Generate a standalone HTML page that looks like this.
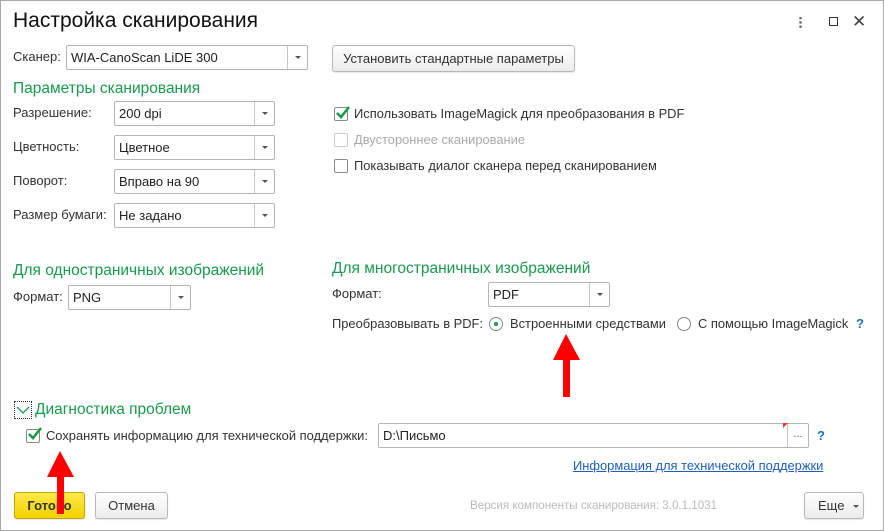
<!DOCTYPE html>
<html><head><meta charset="utf-8"><style>
*{box-sizing:border-box;margin:0;padding:0}
body{width:884px;height:531px;background:#fff;font-family:"Liberation Sans",Arial,sans-serif;font-size:13px;color:#333;position:relative;overflow:hidden}
#win{position:absolute;left:0;top:0;width:884px;height:531px;border:1px solid #a8a8a8}
.a{position:absolute;white-space:nowrap}
.t{line-height:16px}
.g{color:#1a9a4c;font-size:15.5px}
.box{position:absolute;border:1px solid #b5b5b5;border-radius:2px;background:#fff;height:25px;line-height:23px;padding-left:4px;color:#222}
.box .dd{position:absolute;right:0;top:0;width:20px;height:23px;border-left:1px solid #c8c8c8}
.box .dd:after{content:"";position:absolute;left:7px;top:10px;border-left:3px solid transparent;border-right:3px solid transparent;border-top:3px solid #555}
.btn{position:absolute;border:1px solid #b8b8b8;border-radius:3px;background:linear-gradient(#fff,#ececec);height:27px;line-height:25px;text-align:center;color:#333;box-shadow:0 1px 1px rgba(0,0,0,.1)}
.cb{position:absolute;width:14px;height:14px;border:1px solid #8a8a8a;border-radius:2px;background:#fff}
.rd{position:absolute;width:14px;height:14px;border:1px solid #8a8a8a;border-radius:50%;background:#fff}
</style></head><body><div id="win">
<div class="a" style="left:12px;top:8px;font-size:21px;color:#111">Настройка сканирования</div>
<div class="a" style="left:798px;top:15px;width:3px;height:13px;background:radial-gradient(circle,#666 1.2px,transparent 1.4px) 0 0/3px 4.3px"></div>
<div class="a" style="left:828px;top:16px;width:9px;height:9px;border:1.3px solid #333"></div>
<div class="a" style="left:851px;top:11px;font-size:17px;color:#444">✕</div>

<div class="a t" style="left:12px;top:48px">Сканер:</div>
<div class="box" style="left:65px;top:44px;width:242px">WIA-CanoScan LiDE 300<div class="dd"></div></div>
<div class="btn" style="left:331px;top:44px;width:243px">Установить стандартные параметры</div>

<div class="a g" style="left:12px;top:79px">Параметры сканирования</div>
<div class="a t" style="left:12px;top:104px">Разрешение:</div>
<div class="box" style="left:113px;top:100px;width:161px">200 dpi<div class="dd"></div></div>
<div class="a t" style="left:12px;top:138px">Цветность:</div>
<div class="box" style="left:113px;top:134px;width:161px">Цветное<div class="dd"></div></div>
<div class="a t" style="left:12px;top:172px">Поворот:</div>
<div class="box" style="left:113px;top:168px;width:161px">Вправо на 90<div class="dd"></div></div>
<div class="a t" style="left:12px;top:206px">Размер бумаги:</div>
<div class="box" style="left:113px;top:202px;width:161px">Не задано<div class="dd"></div></div>

<div class="cb" style="left:333px;top:106px"></div>
<svg class="a" style="left:334px;top:104px" width="16" height="16"><path d="M2 8 L6 12 L14 2" stroke="#1a9a4c" stroke-width="2.6" fill="none"/></svg>
<div class="a t" style="left:353px;top:105px;font-size:12.9px">Использовать ImageMagick для преобразования в PDF</div>
<div class="cb" style="left:333px;top:132px;border-color:#ccc"></div>
<div class="a t" style="left:353px;top:131px;color:#aaa;font-size:12.9px">Двустороннее сканирование</div>
<div class="cb" style="left:333px;top:158px"></div>
<div class="a t" style="left:353px;top:157px;font-size:12.9px">Показывать диалог сканера перед сканированием</div>

<div class="a g" style="left:12px;top:261px">Для одностраничных изображений</div>
<div class="a t" style="left:12px;top:288px">Формат:</div>
<div class="box" style="left:67px;top:284px;width:123px">PNG<div class="dd"></div></div>

<div class="a g" style="left:331px;top:259px">Для многостраничных изображений</div>
<div class="a t" style="left:331px;top:285px">Формат:</div>
<div class="box" style="left:487px;top:281px;width:122px">PDF<div class="dd"></div></div>
<div class="a t" style="left:331px;top:315px;font-size:12.9px">Преобразовывать в PDF:</div>
<div class="rd" style="left:488px;top:316px"></div>
<div class="a" style="left:493px;top:321px;width:4px;height:4px;border-radius:50%;background:#1a9a4c"></div>
<div class="a t" style="left:509px;top:315px;font-size:12.9px">Встроенными средствами</div>
<div class="rd" style="left:676px;top:316px"></div>
<div class="a t" style="left:697px;top:315px;font-size:12.9px">С помощью ImageMagick</div>
<div class="a t" style="left:855px;top:315px;color:#1f6fc0;font-weight:bold">?</div>

<svg class="a" style="left:550px;top:333px" width="32" height="64"><polygon points="15,0 29,26 19,26 19,63 12,63 12,26 2,26" fill="#f00"/></svg>

<div class="a" style="left:13px;top:400px;width:18px;height:18px;border:1px dotted #333"></div>
<svg class="a" style="left:14px;top:401px" width="16" height="16"><path d="M2 5 L8 11 L14 5" stroke="#1a9a4c" stroke-width="1.3" fill="none"/></svg>
<div class="a g" style="left:34px;top:400px">Диагностика проблем</div>
<div class="cb" style="left:25px;top:428px"></div>
<svg class="a" style="left:26px;top:425px" width="16" height="16"><path d="M2 8 L6 12 L14 2" stroke="#1a9a4c" stroke-width="2.6" fill="none"/></svg>
<div class="a t" style="left:45px;top:427px;font-size:12.9px">Сохранять информацию для технической поддержки:</div>
<div class="box" style="left:377px;top:422px;width:431px">D:\Письмо
<div style="position:absolute;right:0;top:0;width:21px;height:23px;border-left:1px solid #c8c8c8;line-height:20px;text-align:center;font-size:11px;color:#555">...</div>
<div style="position:absolute;right:20px;top:-1px;border-top:5px solid #e33;border-right:5px solid transparent"></div></div>
<div class="a t" style="left:816px;top:427px;color:#1f6fc0;font-weight:bold">?</div>
<div class="a t" style="left:572px;top:457px;color:#1f5fb8;text-decoration:underline;font-size:12.9px">Информация для технической поддержки</div>

<div class="btn" style="left:13px;top:491px;width:71px;background:linear-gradient(#ffe94a,#f2d200);border-color:#c4a800;font-weight:bold;color:#333">Готово</div>
<div class="btn" style="left:94px;top:491px;width:73px">Отмена</div>
<svg class="a" style="left:44px;top:450px" width="32" height="64"><polygon points="15,0 29,26 19,26 19,63 12,63 12,26 2,26" fill="#f00"/></svg>
<div class="a t" style="left:469px;top:497px;color:#bbb;font-size:11.6px">Версия компоненты сканирования: 3.0.1.1031</div>
<div class="btn" style="left:803px;top:491px;width:60px;text-align:left;padding-left:13px">Еще<span style="position:absolute;left:48px;top:12px;border-left:3px solid transparent;border-right:3px solid transparent;border-top:3px solid #555"></span></div>
</div></body></html>
